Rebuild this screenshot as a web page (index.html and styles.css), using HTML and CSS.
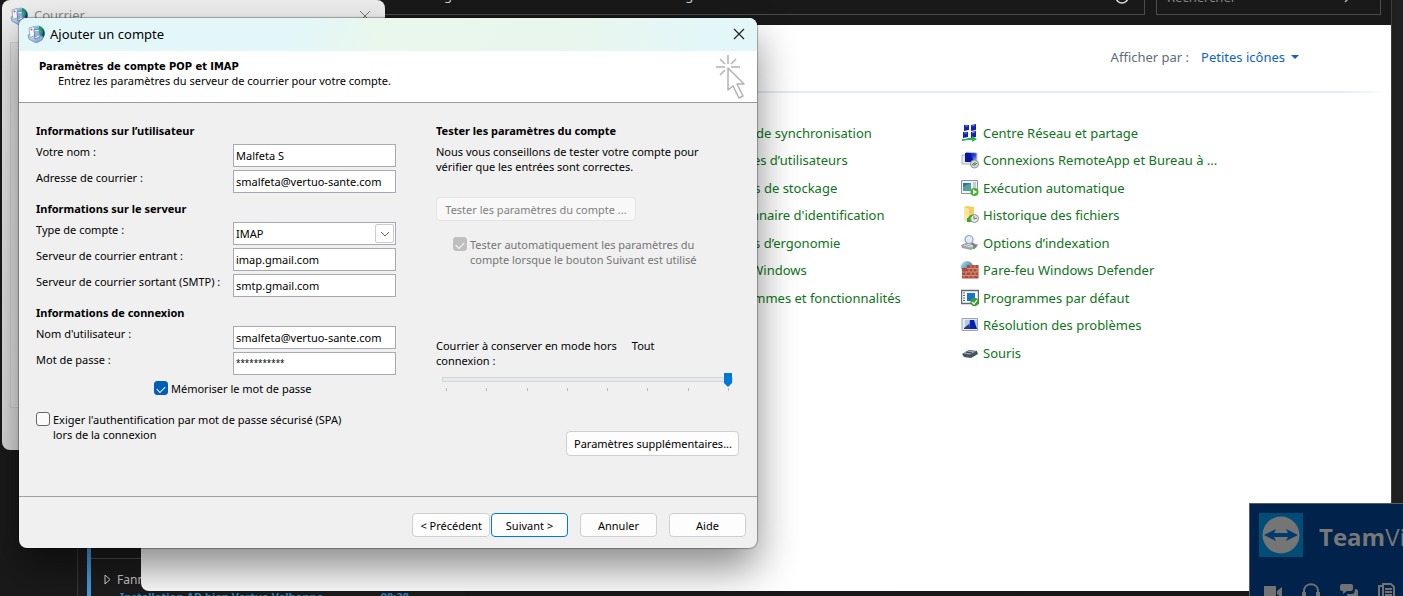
FILE: index.html
```html
<!DOCTYPE html>
<html lang="fr">
<head>
<meta charset="utf-8">
<title>Ajouter un compte</title>
<link rel="stylesheet" href="styles.css">
</head>
<body>
<svg width="0" height="0" class="defs" aria-hidden="true">
  <defs>
    <linearGradient id="globe" x1="0" y1="0" x2="1" y2="1"><stop offset="0" stop-color="#b9e2f7"/><stop offset="1" stop-color="#0b5e96"/></linearGradient>
    <linearGradient id="tray" x1="0" y1="0" x2="1" y2="1"><stop offset="0" stop-color="#e4f0fb"/><stop offset="1" stop-color="#6f91c4"/></linearGradient>
    <linearGradient id="screen" x1="0" y1="0" x2="1" y2="1"><stop offset="0" stop-color="#0613a0"/><stop offset=".5" stop-color="#1b35cf"/><stop offset="1" stop-color="#b4c6ef"/></linearGradient>
    <symbol id="mail" viewBox="0 0 18 18">
      <circle cx="10.500" cy="8" r="7.500" fill="url(#globe)"/>
      <path d="M12 1c3 1 6 4 5.500 8l-2.500 4-2-3 1-4-2-2z" fill="#1f9a45"/>
      <path d="M15 3c3 3 3 7 1 10l-1-3 1-3z" fill="#123f9e"/>
      <path d="M1 10l3-1 9 1 3 2-1 3-6 3-7-4z" fill="url(#tray)" stroke="#7089b3" stroke-width=".8"/>
      <path d="M2 3l5-1.500 1 9-5 2z" fill="#f4faff" stroke="#7c9fca" stroke-width=".8"/>
      <path d="M7 5l5-1 1 8-5 2z" fill="#e9f2fc" stroke="#4770ab" stroke-width=".8"/>
      <circle cx="4.500" cy="4.500" r="1" fill="#de4b35"/>
      <path d="M9 6v6M11 6v5" stroke="#4d74b3"/>
    </symbol>
  </defs>
</svg>

<main class="desktop">
  <section class="inbox">
    <div class="inbox-row">
      <svg width="7" height="11" viewBox="0 0 7 11"><path d="M1 1v9l5-4.500z" fill="none" stroke="#ddd"/></svg>
      <span class="sender">Fanny</span>
    </div>
    <div class="inbox-subject"><span>Installation AD bien Vertuo Valbonne</span><span>08:38</span></div>
  </section>

  <section class="panel">
    <header class="panel-bar">
      <div class="address">
        <span>Panneau de configuration</span><span>Tous les Panneaux de configuration</span>
        <svg class="refresh" width="16" height="16" viewBox="0 0 16 16"><circle cx="8" cy="8" r="6" fill="none" stroke="#ddd" stroke-width="1.500"/></svg>
      </div>
      <div class="search"><span>Rechercher</span>
        <svg width="14" height="14" viewBox="0 0 14 14"><path d="M1 13l5-5" stroke="#aaa" stroke-width="1.500"/><circle cx="8" cy="6" r="4" fill="none" stroke="#aaa"/></svg>
      </div>
    </header>
    <div class="view">
      <span>Afficher par :</span>
      <button type="button" class="view-button">Petites icônes <i class="caret"></i></button>
    </div>
    <div class="items">
      <ul>
        <li><a href="#">Centre de synchronisation</a></li>
        <li><a href="#">Comptes d’utilisateurs</a></li>
        <li><a href="#">Espaces de stockage</a></li>
        <li><a href="#">Gestionnaire d'identification</a></li>
        <li><a href="#">Options d’ergonomie</a></li>
        <li><a href="#">Outils Windows</a></li>
        <li><a href="#">Programmes et fonctionnalités</a></li>
        <li><a href="#">Région</a></li>
      </ul>
      <ul>
        <li><a href="#"><svg viewBox="0 0 18 18"><path d="M3 1l5 0v5l-5 1zM10 1l5-1v6l-5 1zM2 8l5 0v5l-5 1zM10 8l5-1v6l-5 1z" fill="#1223b4"/><path d="M4 2l3 0M11 2l3-1M3 9l3 0M11 9l3-1" stroke="#6d8cf1"/><path d="M1 15h4l2-1 4 0v-2l5 3-5 3v-2H7l-6 1z" fill="#29b14c"/></svg>Centre Réseau et partage</a></li>
        <li><a href="#"><svg viewBox="0 0 18 18"><path d="M1 4h9v9H1z" fill="#e9ecf4" stroke="#a6aebf"/><path d="M5 1l11 1v9l-11-1z" fill="url(#screen)" stroke="#c3cbdc"/><path d="M4 2l5 0 4 9H4z" fill="#0615a3"/><circle cx="13.500" cy="13" r="4" fill="#d5dad5" stroke="#8c968f"/><path d="M11 14l2-2v3M14 11v3l2-2" stroke="#4c8a57" fill="none"/></svg>Connexions RemoteApp et Bureau à ...</a></li>
        <li><a href="#"><svg viewBox="0 0 18 18"><path d="M.5 1.500h16v13H.5z" fill="#f0f3f6" stroke="#8b949f"/><path d="M2 4h8v8H2z" fill="#35739a"/><path d="M2 8l8-4v8H2z" fill="#55a295"/><path d="M12 4h3M12 6h3M12 8h3" stroke="#9aa5b1"/><circle cx="13.500" cy="13" r="4" fill="#43b52e"/><path d="M12 10.500l4 2.500-4 2.500z" fill="#fff"/></svg>Exécution automatique</a></li>
        <li><a href="#"><svg viewBox="0 0 18 18"><path d="M3 1l3-1 7 1v13l-7 2-3-2z" fill="#f3cb67"/><path d="M3 1l5 2v14l-5-3z" fill="#ffe6a0"/><circle cx="13.500" cy="12.500" r="4" fill="#e2e7e4" stroke="#8f9995"/><path d="M13 10v3l3-1" fill="none" stroke="#6b7873"/><path d="M7 12c1-3 4-4 6-3l-2 1c-2 1-2 3-1 5l1 1-5 0v-4z" fill="#35a936"/></svg>Historique des fichiers</a></li>
        <li><a href="#"><svg viewBox="0 0 18 18"><path d="M0 11l5-2 12 1-1 3-6 3-9-2z" fill="#a1a4a8"/><path d="M3 11l6 2 5-2M6 10l6 2" stroke="#e1e3e6" fill="none"/><circle cx="8" cy="5.500" r="4" fill="#dcecfa" stroke="#8ea4ba" stroke-width="1.200"/><path d="M11 9l4 4" stroke="#747a83" stroke-width="2"/><path d="M12 14h2" stroke="#4ab04d" stroke-width="2"/></svg>Options d’indexation</a></li>
        <li><a href="#"><svg viewBox="0 0 18 18"><circle cx="6" cy="6" r="6" fill="url(#globe)"/><path d="M1 7h5V4h11.500v13.500H1z" fill="#ac4c39"/><path d="M6 7.500h12M1 11h17M1 14.500h17M10 4v3M14 4v3M8 7.500V11M12 7.500V11M16 7.500V11M5 11v3.500M10 11v3.500M14 11v3.500M3 14.500v3M8 14.500v3M12 14.500v3" stroke="#dc9b8a" stroke-width=".8"/></svg>Pare-feu Windows Defender</a></li>
        <li><a href="#"><svg viewBox="0 0 18 18"><path d="M.5 1.500h17v13H.5z" fill="#fff" stroke="#5f6975" stroke-width="1.400"/><path d="M6 4h8v8H6z" fill="#1976ce"/><path d="M2 4h2M2 6.500h2M2 9h2M2 11.500h2" stroke="#2669a5"/><circle cx="13.500" cy="13" r="4.200" fill="#3b9f32"/><path d="M11 13l2 2 3-4" fill="none" stroke="#fff" stroke-width="1.200"/></svg>Programmes par défaut</a></li>
        <li><a href="#"><svg viewBox="0 0 18 18"><path d="M1 2.500h15.500v12H1z" fill="#e8ebf3" stroke="#9ba2b2"/><path d="M4 4h12v9H4z" fill="#b9c8ee"/><path d="M9 4l4 0 3 9H8z" fill="#0920ae"/><path d="M3 12l5-4v5H3z" fill="#263b83"/></svg>Résolution des problèmes</a></li>
        <li><a href="#"><svg viewBox="0 0 18 18"><path d="M1 10l7-4 8 1 1 3-7 4-7-1z" fill="#45525f"/><path d="M2 9.500l6-3 7 1-6 3z" fill="#99a5b1"/><path d="M5 8l6 1" stroke="#303b47"/></svg>Souris</a></li>
      </ul>
    </div>
  </section>

  <section class="mail-window">
    <div class="mail-title"><svg width="18" height="18"><use href="#mail"/></svg><span>Courrier</span>
      <svg class="mail-close" width="12" height="12" viewBox="0 0 12 12"><path d="M1 1l10 10M11 1L1 11" stroke="#777"/></svg>
    </div>
    <div class="mail-page"></div>
  </section>

  <form class="dialog">
    <header class="title-bar">
      <svg width="18" height="18"><use href="#mail"/></svg>
      <h1>Ajouter un compte</h1>
      <button type="button" class="close" aria-label="Fermer"><svg width="12" height="12" viewBox="0 0 12 12"><path d="M1 1l10 10M11 1L1 11" stroke="#222" stroke-width="1.200"/></svg></button>
    </header>
    <div class="intro">
      <div class="intro-text">
        <h2>Paramètres de compte POP et IMAP</h2>
        <p>Entrez les paramètres du serveur de courrier pour votre compte.</p>
      </div>
      <svg width="30" height="44" viewBox="0 0 30 44" fill="none" stroke="#b2b2b2" stroke-width="1.500"><path d="M12 0v9M0 12h9M15 12h9M4 4l5 5M20 4l-5 5M4 20l5-5"/><path d="M12 13v22l5-4 6 12 4-2-6-12h7z" stroke-linejoin="round"/></svg>
    </div>

    <div class="body">
      <div class="fields">
        <h3>Informations sur l’utilisateur</h3>
        <div class="field"><label for="name">Votre nom :</label><input id="name" type="text" value="Malfeta S"></div>
        <div class="field"><label for="address">Adresse de courrier :</label><input id="address" type="text" value="smalfeta@vertuo-sante.com"></div>
        <h3>Informations sur le serveur</h3>
        <div class="field"><label for="type">Type de compte :</label>
          <div class="select"><select id="type"><option>IMAP</option></select><span class="arrow"><svg width="10" height="6" viewBox="0 0 10 6"><path d="M1 1l4 4 4-4" fill="none" stroke="#666"/></svg></span></div></div>
        <div class="field"><label for="incoming">Serveur de courrier entrant :</label><input id="incoming" type="text" value="imap.gmail.com"></div>
        <div class="field"><label for="outgoing">Serveur de courrier sortant (SMTP) :</label><input id="outgoing" type="text" value="smtp.gmail.com"></div>
        <h3>Informations de connexion</h3>
        <div class="field"><label for="user">Nom d'utilisateur :</label><input id="user" type="text" value="smalfeta@vertuo-sante.com"></div>
        <div class="field"><label for="password">Mot de passe :</label><input id="password" class="secret" type="text" value="***********"></div>
        <label class="check remember"><input type="checkbox" checked><span>Mémoriser le mot de passe</span></label>
        <label class="check spa"><input type="checkbox"><span>Exiger l'authentification par mot de passe sécurisé (SPA)<br>lors de la connexion</span></label>
      </div>

      <div class="tests">
        <h3>Tester les paramètres du compte</h3>
        <p>Nous vous conseillons de tester votre compte pour<br>vérifier que les entrées sont correctes.</p>
        <button type="button" class="button test" disabled>Tester les paramètres du compte ...</button>
        <label class="check auto"><input type="checkbox" checked disabled><span>Tester automatiquement les paramètres du<br>compte lorsque le bouton Suivant est utilisé</span></label>
        <div class="keep"><label for="offline">Courrier à conserver en mode hors<br>connexion :</label><output for="offline">Tout</output></div>
        <input id="offline" class="slider" type="range" min="0" max="7" value="7">
        <div class="ticks"><i></i><i></i><i></i><i></i><i></i><i></i><i></i><i></i></div>
        <button type="button" class="button more">Paramètres supplémentaires...</button>
      </div>
    </div>

    <footer class="actions">
      <div class="pair"><button type="button" class="button">&lt; Précédent</button><button type="button" class="button primary">Suivant &gt;</button></div>
      <button type="button" class="button">Annuler</button>
      <button type="button" class="button">Aide</button>
    </footer>
  </form>

  <aside class="viewer">
    <div class="brand">
      <svg width="44" height="44" viewBox="0 0 44 44"><path d="M0 0h44v44H0z" fill="#004d78"/><circle cx="22" cy="22" r="18.500" fill="#757575"/><path d="M5 22l12-6-2 4h14l-2-4 12 6-12 6 2-4H15l2 4z" fill="#003a70"/></svg>
      <span class="brand-name"><b>Team</b>Viewer</span>
    </div>
    <div class="tools">
      <svg width="20" height="18" viewBox="0 0 20 18"><path d="M1 3h12v13H1zM14 8l5-4v11l-5-4z" fill="#727272"/></svg>
      <svg width="20" height="18" viewBox="0 0 20 18"><path d="M3 12V8c0-9 14-9 14 0v4" fill="none" stroke="#727272" stroke-width="2"/><path d="M1 9h4v8H1zM15 9h4v8h-4z" fill="#727272"/></svg>
      <svg width="20" height="18" viewBox="0 0 20 18"><path d="M3 1h9q2 0 2 2v3q0 2-2 2H8l-4 3V8H3Q1 8 1 6V3q0-2 2-2zM16 6q3 0 3 2v4q0 2-2 2l1 3-4-3h-4q-2 0-2-3h5q3 0 3-5z" fill="#727272"/></svg>
      <svg width="20" height="18" viewBox="0 0 20 18"><path d="M5 3H2v14M6 1h8l3 3v13H6zM8 6h7M8 9h7M8 12h7" fill="none" stroke="#727272" stroke-width="2"/></svg>
    </div>
  </aside>
</main>
</body>
</html>
```
FILE: styles.css
```css
* { box-sizing: border-box; }

body {
  margin: 0;
  background: #1b1b1b;
  color: #000;
  font: 11px/15px "Noto Sans", "Open Sans", sans-serif;
}

h1, h2, h3, p, ul { margin: 0; padding: 0; }
button, input, select { font: inherit; color: inherit; margin: 0; }
.defs { position: absolute; }

.desktop {
  position: relative;
  height: 100vh;
  overflow: hidden;
  background: linear-gradient(90deg, #1a1a1a, #181818 90%, #202020);
}

/* Message list at the bottom left */
.inbox {
  position: absolute;
  left: 77px;
  bottom: 0;
  width: 388px;
  height: 60px;
  overflow: hidden;
  padding: 22px 0 0 26px;
  border-left: 1px solid #3a3a3a;
  background: linear-gradient(#479bdf, #479bdf) 9px 0 / 4px 100% no-repeat,
    linear-gradient(#4a4a4a, #4a4a4a) 9px 22px / 100% 1px no-repeat, #1c1c1c;
}
.inbox-row { display: flex; align-items: center; gap: 6px; height: 32px; padding-top: 10px; }
.sender { font-size: 12px; color: #c9c9c9; }
.inbox-subject {
  display: flex;
  justify-content: space-between;
  padding: 0 56px 0 16px;
  color: #2f86c4;
  font-weight: bold;
  line-height: 14px;
}

/* Control panel */
.panel {
  position: absolute;
  inset: 0 11px 5px 141px;
  overflow: hidden;
  border-right: 1px solid #3c3c3c;
  border-radius: 0 0 0 8px;
  background: #fff;
  font-size: 13px;
  line-height: 18px;
}
.panel-bar { display: flex; gap: 11px; height: 25px; padding-right: 10px; background: #191919; }
.address, .search {
  display: flex;
  height: 15px;
  border: 1px solid #4b4b4b;
  border-top: 0;
  line-height: 18px;
}
.address { flex: 1; gap: 24px; padding: 0 14px 0 196px; color: #ccc; }
.address span, .search span { margin-top: -14px; }
.refresh { margin: -11px 0 0 auto; }
.search { width: 225px; justify-content: space-between; padding: 0 22px 0 10px; color: #888; }
.search span { margin-top: -12px; }
.search svg { margin-top: -11px; }
.view {
  display: flex;
  align-items: center;
  justify-content: flex-end;
  gap: 12px;
  height: 68px;
  padding: 0 92px 4px 0;
  color: #5f6b7c;
  background: linear-gradient(90deg, #e3ebf5 96%, #fff) bottom / 100% 2px no-repeat;
}
.view-button { display: flex; align-items: center; gap: 6px; padding: 0; border: 0; background: none; color: #0b62cf; }
.caret { border: 4px solid transparent; border-top-color: #0b62cf; border-bottom: 0; }
.items { display: flex; padding: 26px 0 0 549px; }
.items ul {
  display: grid;
  flex: 0 0 271px;
  grid-template-rows: repeat(9, 1fr);
  height: 248px;
  list-style: none;
}
.items li { padding-left: 22px; }
.items a { display: flex; align-items: center; height: 27px; color: #0e7420; text-decoration: none; white-space: nowrap; }
.items svg { flex: none; width: 18px; height: 18px; margin: 0 4px 0 -22px; }

/* Mail window behind the dialog */
.mail-window {
  position: absolute;
  left: 2px;
  top: 0;
  width: 383px;
  height: 450px;
  padding: 5px 8px 14px 8px;
  border-radius: 8px;
  background: linear-gradient(#ededed, #dcdcdc);
  color: #888;
}
.mail-title { display: flex; align-items: center; gap: 6px; height: 21px; font-size: 13px; }
.mail-close { margin: 0 6px 0 auto; }
.mail-page { height: 366px; margin-top: 16px; border: 1px solid #cfcfcf; background: #e2e2e2; }

/* Account dialog */
.dialog {
  position: absolute;
  left: 19px;
  top: 18px;
  width: 738px;
  overflow: hidden;
  border-radius: 8px;
  background: #f0f0f0;
  box-shadow: 0 0 1px 1px rgba(0, 0, 0, .3), 0 20px 40px rgba(0, 0, 0, .46);
}
.title-bar {
  display: flex;
  align-items: center;
  gap: 5px;
  height: 33px;
  padding: 0 12px 2px 8px;
  background: linear-gradient(105deg, #e3f7f8 38%, #eaf7ec 50%, #e9f6ee 75%, #e3f7f8 92%);
}
.title-bar h1 { flex: 1; font-size: 13px; font-weight: normal; line-height: 18px; }
.close { display: flex; padding: 0; border: 0; background: none; }
.intro {
  display: flex;
  justify-content: space-between;
  padding: 4px 11px 3px 20px;
  border-bottom: 1px solid #999;
  background: #fff;
}
.intro-text { padding-top: 4px; }
h2, h3 { font-size: 11px; font-weight: bold; }
h2 { font-family: "DejaVu Sans Condensed", "Noto Sans", sans-serif; line-height: 15px; }
.intro p { padding-left: 19px; line-height: 14px; }

.body { display: flex; gap: 40px; padding: 20px 18px 40px 17px; }
.fields { display: flex; flex-direction: column; width: 360px; }
h3 { line-height: 16px; }
.fields h3 { margin-bottom: 5px; }
.field + h3 { margin-top: 8px; }
.field { display: flex; justify-content: space-between; }
.field + .field { margin-top: 3px; }
.field label { line-height: 16px; white-space: nowrap; }
.field input, .select select {
  width: 163px;
  height: 23px;
  padding: 0 2px 1px;
  border: 1px solid #a9a9b1;
  border-radius: 0;
  background: #fff;
  appearance: none;
}
.field .secret { padding-bottom: 2px; font-size: 8px; }
.select { position: relative; display: flex; }
.select .arrow {
  position: absolute;
  right: 2px;
  top: 2px;
  display: flex;
  align-items: center;
  justify-content: center;
  width: 19px;
  height: 19px;
  border: 1px solid #ccc;
  border-radius: 2px;
  background: #fdfdfd;
  pointer-events: none;
}
.check { display: flex; align-items: flex-start; gap: 3px; }
.check input {
  flex: none;
  width: 14px;
  height: 14px;
  border: 1px solid #666;
  border-radius: 3px;
  background: #fafafa;
  appearance: none;
}
.check input:checked { display: grid; place-items: center; border-color: #005fb8; background: #005fb8; }
.check input:checked::before {
  content: "";
  width: 7px;
  height: 4px;
  border: solid #fff;
  border-width: 0 0 1px 1px;
  transform: rotate(-45deg);
}
.check input:disabled { border-color: #bfbfbf; background: #bfbfbf; }
.remember { margin: 6px 0 0 118px; }
.spa { margin-top: 16px; }
.spa, .auto { white-space: nowrap; }

.tests { display: flex; flex: 1; flex-direction: column; align-items: flex-start; }
.tests p { margin-top: 5px; }
.button {
  min-width: 77px;
  height: 24px;
  padding: 0 7px;
  border: 1px solid #d0d0d0;
  border-radius: 4px;
  background: #fdfdfd;
  white-space: nowrap;
}
.test { width: 200px; margin-top: 23px; border-color: #e3e3e3; background: #f8f8f8; color: #808080; }
.auto { margin: 16px 0 0 17px; color: #757575; }
.keep { display: flex; gap: 15px; margin-top: 71px; }
.slider { align-self: stretch; height: 15px; margin: 4px 6px 0; background: none; appearance: none; }
.slider::-webkit-slider-runnable-track { height: 5px; border: 1px solid #d3d6d6; background: #e7eaea; }
.slider::-webkit-slider-thumb {
  width: 8px;
  height: 14px;
  margin-top: -5px;
  background: #0078d7;
  clip-path: polygon(0 0, 100% 0, 100% 72%, 50% 100%, 0 72%);
  appearance: none;
}
.ticks { display: flex; align-self: stretch; justify-content: space-between; margin: 1px 10px 0; }
.ticks i { width: 1px; height: 3px; background: #bbb; }
.button.more { align-self: flex-end; width: 173px; height: 25px; margin-top: 40px; }

.actions {
  display: flex;
  justify-content: flex-end;
  gap: 12px;
  padding: 16px 11px 11px;
  border-top: 1px solid #a0a0a0;
}
.pair { display: flex; gap: 1px; }
.primary { border-color: #0078d4; }

/* Remote session widget */
.viewer {
  position: absolute;
  right: 0;
  bottom: 0;
  width: 154px;
  height: 93px;
  overflow: hidden;
  padding: 9px 0 0 9px;
  border: solid #5b5b5b;
  border-width: 1px 0 0 1px;
  background: #00224b;
}
.brand { display: flex; align-items: center; gap: 16px; }
.brand svg { flex: none; }
.brand-name { padding-top: 4px; color: #777; font: 24px/40px "Open Sans", "Noto Sans", sans-serif; white-space: nowrap; }
.tools { display: flex; gap: 18px; margin: 26px 0 0 4px; }
.tools svg { flex: none; }
```
